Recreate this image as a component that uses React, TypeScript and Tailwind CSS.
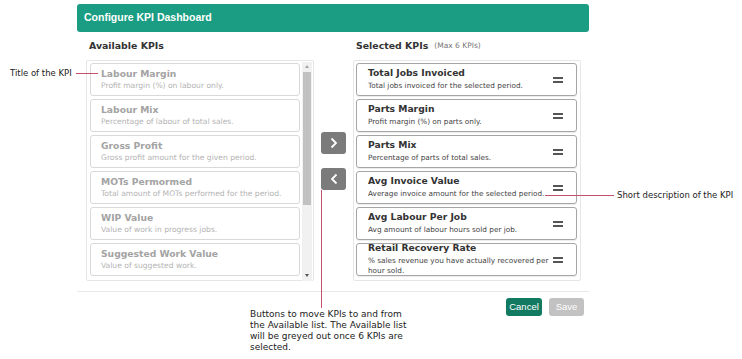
import React from "react";

const available = [
  { t: "Labour Margin", d: "Profit margin (%) on labour only." },
  { t: "Labour Mix", d: "Percentage of labour of total sales." },
  { t: "Gross Profit", d: "Gross profit amount for the given period." },
  { t: "MOTs Permormed", d: "Total amount of MOTs performed for the period." },
  { t: "WIP Value", d: "Value of work in progress jobs." },
  { t: "Suggested Work Value", d: "Value of suggested work." },
];

const selected = [
  { t: "Total Jobs Invoiced", d: "Total jobs invoiced for the selected period." },
  { t: "Parts Margin", d: "Profit margin (%) on parts only." },
  { t: "Parts Mix", d: "Percentage of parts of total sales." },
  { t: "Avg Invoice Value", d: "Average invoice amount for the selected period." },
  { t: "Avg Labour Per Job", d: "Avg amount of labour hours sold per job." },
  { t: "Retail Recovery Rate", d: "% sales revenue you have actually recovered per hour sold." },
];

function Handle() {
  return (
    <div className="flex flex-col gap-[2px] w-[10px] shrink-0">
      <div className="h-[2px] bg-[#555]" />
      <div className="h-[2px] bg-[#555]" />
    </div>
  );
}

export default function App() {
  const font = { fontFamily: '"DejaVu Sans", Verdana, sans-serif' };
  const sans = { fontFamily: '"Liberation Sans", Arial, sans-serif' };
  return (
    <div className="relative w-[742px] h-[359px] bg-white overflow-hidden" style={font}>
      <div className="ml-[77px] w-[512px] pt-[4px]">
        <div className="h-[28px] bg-[#1a9d82] rounded-[3px] flex items-center px-[7px] text-white font-bold text-[10.5px]" style={sans}>
          Configure KPI Dashboard
        </div>
        <div className="flex pl-[9px] pr-[8px]">
          <div className="w-[228px]">
            <div className="h-[28px] flex items-center pl-[3px] text-[9.4px] font-bold text-[#333]">Available KPIs</div>
            <div className="h-[221px] border border-[#e6e6e6] rounded-[2px] flex pl-[3px] pt-[2px]">
              <div className="w-[210px]">
                {available.map((k) => (
                  <div key={k.t} className="h-[33px] mb-[3px] border border-[#d9d9d9] rounded-[3px] pl-[10px] pt-[5px] leading-none">
                    <div className="text-[9.2px] font-bold text-[#a3a3a3]">{k.t}</div>
                    <div className="text-[7.6px] text-[#b3b3b3] mt-[4px]">{k.d}</div>
                  </div>
                ))}
              </div>
              <div className="ml-[2px] -mt-[1px] w-[10px] h-[219px] bg-[#f1f1f1] flex flex-col items-center">
                <div className="h-[9px] flex items-center justify-center">
                  <div className="w-0 h-0 border-l-[2.5px] border-r-[2.5px] border-b-[3px] border-l-transparent border-r-transparent border-b-[#a3a3a3]" />
                </div>
                <div className="w-[8px] h-[133px] bg-[#c1c1c1] mt-[1px]" />
                <div className="flex-1" />
                <div className="h-[12px] flex items-center justify-center">
                  <div className="w-0 h-0 border-l-[2.5px] border-r-[2.5px] border-t-[3px] border-l-transparent border-r-transparent border-t-[#555]" />
                </div>
              </div>
            </div>
          </div>
          <div className="w-[39px] flex flex-col items-center pt-[100px]">
            <div className="w-[25px] h-[22px] bg-[#7b7b7b] rounded-[3px] flex items-center justify-center">
              <svg width="10" height="12" viewBox="0 0 10 12"><path d="M2.5 1.5 L7 6 L2.5 10.5" stroke="white" strokeWidth="1.8" fill="none" /></svg>
            </div>
            <div className="w-[25px] h-[22px] bg-[#7b7b7b] rounded-[3px] flex items-center justify-center mt-[14px]">
              <svg width="10" height="12" viewBox="0 0 10 12"><path d="M7.5 1.5 L3 6 L7.5 10.5" stroke="white" strokeWidth="1.8" fill="none" /></svg>
            </div>
          </div>
          <div className="w-[228px]">
            <div className="h-[28px] flex items-center pl-[3px] text-[#333]">
              <span className="text-[9.4px] font-bold">Selected KPIs</span>
              <span className="text-[7.5px] text-[#777] ml-[6px]">(Max 6 KPIs)</span>
            </div>
            <div className="h-[221px] border border-[#e6e6e6] rounded-[2px] pl-[2px] pt-[2px]">
              {selected.map((k) => (
                <div key={k.t} className="w-[221px] h-[33px] mb-[3px] border border-[#a6a6a6] rounded-[3px] pl-[11px] pr-[13px] flex items-center shadow-[0_1px_1px_rgba(0,0,0,0.08)]">
                  <div className="flex-1 min-w-0 leading-none">
                    <div className="text-[9.2px] font-bold text-[#333]">{k.t}</div>
                    <div className="text-[7.3px] text-[#444] mt-[3px] leading-[10px]">{k.d}</div>
                  </div>
                  <Handle />
                </div>
              ))}
            </div>
          </div>
        </div>
        <div className="mt-[10px] h-px bg-[#e8e8e8]" />
        <div className="flex justify-end gap-[7px] pr-[5px] mt-[6px]" style={sans}>
          <div className="w-[36px] h-[18px] bg-[#137a62] rounded-[3px] text-white text-[9.5px] flex items-center justify-center">Cancel</div>
          <div className="w-[35px] h-[18px] bg-[#c2c2c2] rounded-[3px] text-white text-[9.5px] flex items-center justify-center">Save</div>
        </div>
      </div>

      {/* Annotations */}
      <div className="absolute left-[10px] top-[67px] text-[8.5px] text-[#222] leading-[12px]">Title of the KPI</div>
      <div className="absolute left-[76px] top-[73px] w-[22px] h-px bg-[#c4506c]" />

      <div className="absolute left-[545px] top-[195px] w-[69px] h-px bg-[#c4506c]" />
      <div className="absolute left-[617px] top-[189px] text-[8.5px] text-[#222] leading-[12px]">Short description of the KPI</div>

      <div className="absolute left-[321px] top-[190px] w-px h-[118px] bg-[#c4506c]" />
      <div className="absolute left-[250px] top-[309px] text-[9px] text-[#222] leading-[11px] whitespace-nowrap">
        Buttons to move KPIs to and from<br />
        the Available list. The Available list<br />
        will be greyed out once 6 KPIs are<br />
        selected.
      </div>
    </div>
  );
}
